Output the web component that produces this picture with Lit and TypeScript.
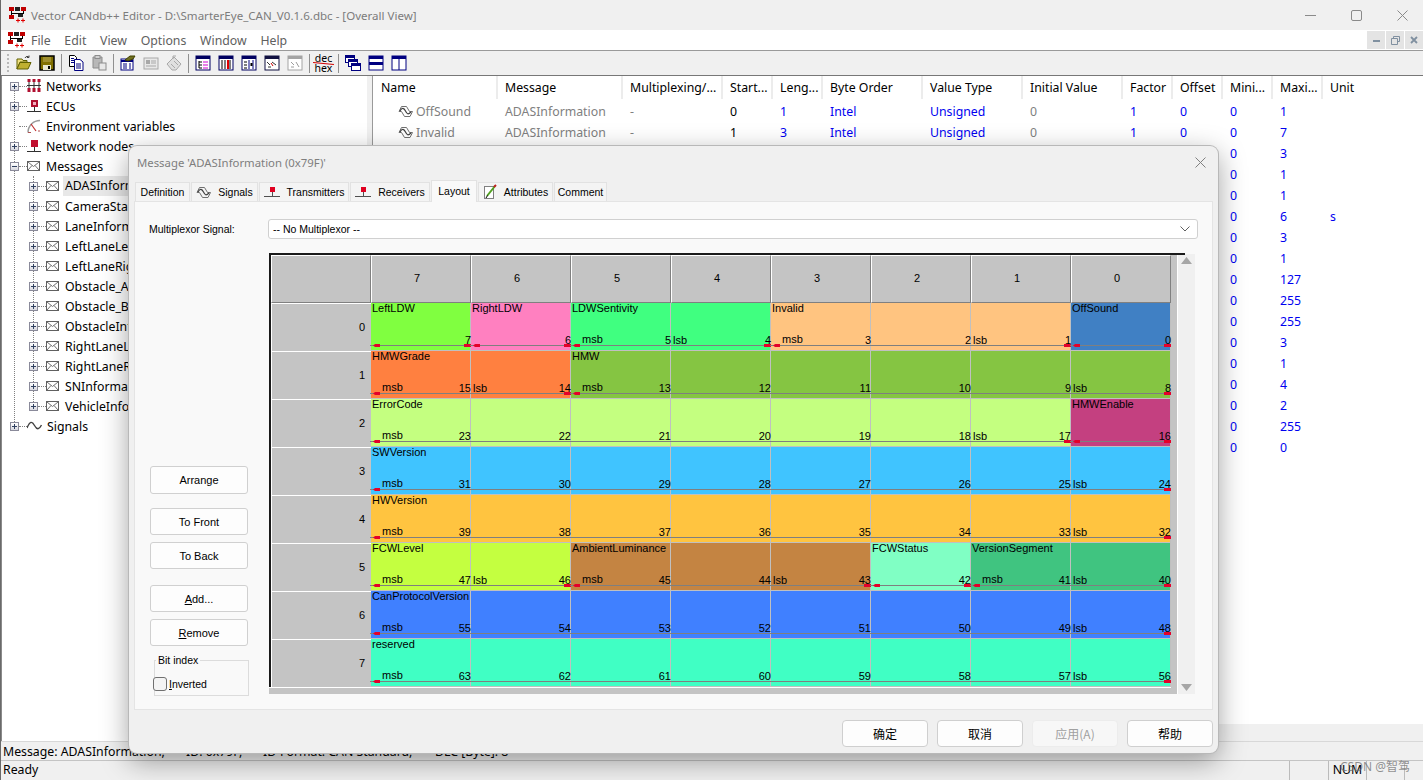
import { LitElement, html, css, svg } from "lit";
import { customElement } from "lit/decorators.js";

const s = (w: number, h: number, inner: unknown) =>
  html`<svg class="ic" width=${w} height=${h} viewBox="0 0 ${w} ${h}">${inner}</svg>`;

const appIcon = s(18, 16, svg`
  <rect x="0" y="0" width="5" height="4" fill="#c00000"/><rect x="6" y="0" width="5" height="4" fill="#202020"/><rect x="12" y="0" width="5" height="4" fill="#c00000"/>
  <path d="M2.5 4V7M14.5 4V7M2.5 6.5H14.5M2.5 7V10" stroke="#000" fill="none"/>
  <rect x="0" y="8" width="5" height="4" fill="#c00000"/><rect x="9" y="7" width="5" height="3" fill="#202020"/>
  <path d="M7 13.5H11M9 11.5V15.5M12 13.5H16M14 11.5V15.5" stroke="#e00000" fill="none"/>`);

const networksIcon = s(14, 14, svg`
  <path d="M0 6.5H14M2 3V11M7 3V11M12 3V11" stroke="#303030" fill="none"/>
  <rect x="0.5" y="0" width="3" height="3" fill="#b01030"/><rect x="5.5" y="0" width="3" height="3" fill="#b01030"/><rect x="10.5" y="0" width="3" height="3" fill="#b01030"/>
  <rect x="0.5" y="9" width="3" height="4" fill="#b01030"/><rect x="5.5" y="9" width="3" height="4" fill="#b01030"/><rect x="10.5" y="9" width="3" height="4" fill="#b01030"/>`);
const ecuIcon = s(14, 14, svg`
  <rect x="4" y="1" width="7" height="7" fill="#b01030"/><rect x="6" y="3" width="3" height="3" fill="#f0b0c0"/>
  <path d="M7.5 8V12M0 12.5H14" stroke="#303030" fill="none"/>`);
const nodeIcon = s(14, 14, svg`
  <rect x="4" y="1" width="7" height="7" fill="#c01030"/>
  <path d="M7.5 8V12M0 12.5H14" stroke="#303030" fill="none"/>`);
const envIcon = s(14, 14, svg`
  <path d="M1 13.5A12 12 0 0 1 13 1.5" stroke="#9a9a9a" stroke-width="1.5" fill="none"/>
  <path d="M4 5L9 12" stroke="#c03030" stroke-width="1.2" fill="none"/>
  <path d="M1 13.5H4M12 13V11" stroke="#b05050" fill="none"/>`);
const mailIcon = s(14, 12, svg`
  <rect x="0.5" y="1.5" width="12" height="9" fill="#fff" stroke="#606060"/>
  <path d="M1 2L6.5 6.5L12 2M1 10L5 5.5M12 10L8 5.5" stroke="#707070" fill="none"/>`);
const waveIcon = s(15, 12, svg`
  <path d="M0 8C3 1 5 1 7.5 5.5S12 10 14.5 5" stroke="#404040" stroke-width="1.4" fill="none"/>`);
const sigIcon = s(15, 13, svg`
  <path d="M1 6.500L3.500 1.500H8.500L11.500 6.500H14.500L12 11.500H6.500L3.500 6.500H1" stroke="#707070" stroke-width="1" fill="none"/>
  <path d="M2 6C4 2 6 3 7.500 6S10 10 13 7" stroke="#404040" stroke-width="1.200" fill="none"/>`);
const txIcon = s(16, 13, svg`
  <rect x="6" y="1" width="5" height="5" fill="#e00020"/>
  <path d="M8.500 6V10M0 10.500H16" stroke="#505050" fill="none"/>`);
const attrIcon = s(14, 16, svg`
  <rect x="1.500" y="2.500" width="9" height="12" fill="#fff" stroke="#808080"/>
  <path d="M4 12L12 2" stroke="#50a020" stroke-width="2"/><path d="M11 3L13 1" stroke="#c02020" stroke-width="2"/><path d="M3 14L4.500 11.500" stroke="#000"/>`);

const openIcon = s(16, 16, svg`
  <path d="M1 4H6L7 5.500H11V7H4L1 14Z" fill="#f0e080" stroke="#606000"/>
  <path d="M1 14L4 7.500H15L12 14Z" fill="#c0b030" stroke="#606000"/>
  <path d="M9 3C10 1 12 1 13 2.500M13 2.500V0.500M13 2.500H11" stroke="#404040" fill="none"/>`);
const saveIcon = s(16, 16, svg`
  <rect x="1" y="1" width="14" height="14" fill="#807000" stroke="#000" stroke-width="1.500"/>
  <rect x="4" y="2" width="8" height="5" fill="#a09030"/>
  <rect x="4" y="10" width="8" height="5" fill="#e8e8d0"/><rect x="9" y="11" width="2" height="3" fill="#000"/>`);
const copyIcon = s(16, 16, svg`
  <path d="M1.500 0.500H6.500L8.500 2.500V11.500H1.500Z" fill="#fff" stroke="#000"/>
  <path d="M6.500 4.500H12L15 7V15.500H6.500Z" fill="#fff" stroke="#000080"/>
  <path d="M3 3.500H6M3 5.500H6M3 7.500H6M8 9H13M8 11H13M8 13H13" stroke="#000080" fill="none"/>`);
const pasteGray = s(16, 16, svg`
  <path d="M2 2H11V13H2Z" fill="#b8b8b8" stroke="#8c8c8c"/><rect x="4" y="0.500" width="5" height="3" fill="#d0d0d0" stroke="#8c8c8c"/>
  <rect x="8" y="8" width="7" height="7" fill="#e8e8e8" stroke="#8c8c8c"/>`);
const editIcon = s(16, 16, svg`
  <rect x="1" y="4" width="12" height="11" fill="#fff" stroke="#000080"/>
  <path d="M1 6H13" stroke="#000080" stroke-width="2"/><path d="M3 9H7M9 9H11M3 11H7M9 11H11M3 13H7M9 13H11" stroke="#000080"/>
  <path d="M5 5L10 1H15L13 4L8 6Z" fill="#707020" stroke="#404000"/>`);
const gray2 = s(16, 16, svg`
  <rect x="1" y="3" width="14" height="11" fill="#e8e8e8" stroke="#a8a8a8"/>
  <rect x="3" y="5" width="4" height="4" fill="#a8a8a8"/><path d="M8 6H13M8 8H13M3 11H13" stroke="#a8a8a8"/>`);
const gray3 = s(16, 16, svg`
  <path d="M1 9L8 2L15 9L10 15H6Z" fill="#e0e0e0" stroke="#a8a8a8"/><path d="M5 9L9 13M8 6L12 10M7 4V1H10" stroke="#a8a8a8" fill="none"/>`);
const win = (inner: unknown, c = "#000060") => s(16, 16, svg`
  <rect x="1" y="1" width="14" height="14" fill="#fff" stroke=${c}/>
  <rect x="1" y="1" width="14" height="3" fill=${c}/>${inner}`);
const v1 = win(svg`<path d="M4 6V13M4 7H7M4 10H7M4 13H7" stroke="#000" fill="none"/><path d="M8 7H13M8 10H13M8 13H13" stroke="#d000d0"/>`);
const v2 = win(svg`<path d="M4 5V14M7 5V14M12 5V14" stroke="#000"/><path d="M10 5V14" stroke="#e00000" stroke-width="2"/>`);
const v3 = win(svg`<path d="M3 7H6M3 10H6M3 13H6" stroke="#000"/><path d="M8 5V14M12 5V14" stroke="#000080"/><rect x="9.500" y="8" width="2" height="3" fill="#000"/>`);
const v4 = win(svg`<path d="M3 7L6 10M8 7L12 10M4 12H7" stroke="#303030"/><path d="M7 8L9 11" stroke="#d00000"/>`, "#101040");
const v5 = win(svg`<path d="M4 7L7 10M9 7L12 12M4 12H7" stroke="#9c9c9c"/>`, "#a4a4a4");
const cascade = s(16, 16, svg`
  <rect x="0.500" y="0.500" width="9" height="7" fill="#fff" stroke="#000080"/><rect x="0.500" y="0.500" width="9" height="2.500" fill="#000080"/>
  <rect x="3.500" y="4.500" width="9" height="7" fill="#fff" stroke="#000080"/><rect x="3.500" y="4.500" width="9" height="2.500" fill="#000080"/>
  <rect x="6.500" y="8.500" width="9" height="7" fill="#fff" stroke="#000080"/><rect x="6.500" y="8.500" width="9" height="2.500" fill="#000080"/>`);
const hsplit = s(16, 16, svg`
  <rect x="1" y="1" width="14" height="14" fill="#fff" stroke="#000080"/>
  <rect x="1" y="1" width="14" height="3" fill="#000080"/><rect x="1" y="7" width="14" height="3" fill="#000080"/>`);
const vsplit = s(16, 16, svg`
  <rect x="1" y="1" width="14" height="14" fill="#fff" stroke="#000080"/>
  <rect x="1" y="1" width="14" height="3" fill="#000080"/><path d="M8 1V15" stroke="#000080"/>`);

const MESSAGES = ["ADASInformation", "CameraStatus", "LaneInformation", "LeftLaneLeft", "LeftLaneRight", "Obstacle_A", "Obstacle_B", "ObstacleInfo", "RightLaneLeft", "RightLaneRight", "SNInformation", "VehicleInformation"];
const COLS = ["Name", "Message", "Multiplexing/...", "Start...", "Leng...", "Byte Order", "Value Type", "Initial Value", "Factor", "Offset", "Mini...", "Maxi...", "Unit"];
const MAXI = ["1", "7", "3", "1", "1", "6", "3", "1", "127", "255", "255", "3", "1", "4", "2", "255", "0"];
const TABS: [string, number, unknown?][] = [
  ["Definition", 55], ["Signals", 67, sigIcon], ["Transmitters", 90, txIcon], ["Receivers", 80, txIcon],
  ["Layout", 46], ["Attributes", 75, attrIcon], ["Comment", 53],
];
// name, colour, first column (0 = bit 7), span
type Sig = [string, string, number, number];
const ROWS: Sig[][] = [
  [["LeftLDW", "#80ff40", 0, 1], ["RightLDW", "#ff80c0", 1, 1], ["LDWSentivity", "#40ff80", 2, 2], ["Invalid", "#ffc480", 4, 3], ["OffSound", "#4080c4", 7, 1]],
  [["HMWGrade", "#ff8040", 0, 2], ["HMW", "#85c542", 2, 6]],
  [["ErrorCode", "#c4ff80", 0, 7], ["HMWEnable", "#c44080", 7, 1]],
  [["SWVersion", "#40c4ff", 0, 8]],
  [["HWVersion", "#ffc440", 0, 8]],
  [["FCWLevel", "#c4ff40", 0, 2], ["AmbientLuminance", "#c48442", 2, 3], ["FCWStatus", "#80ffc4", 5, 1], ["VersionSegment", "#40c480", 6, 2]],
  [["CanProtocolVersion", "#4080ff", 0, 8]],
  [["reserved", "#40ffc4", 0, 8]],
];

@customElement("app-root")
export class AppRoot extends LitElement {
  static styles = css`
    :host { display: block; position: relative; width: 1423px; height: 780px; overflow: hidden; background: #f0f0f0;
      font-family: "Noto Sans", "Noto Sans CJK SC", sans-serif; font-size: 12.3px; color: #000; }
    .ic { display: block; flex: none; }
    .win { display: flex; flex-direction: column; height: 780px; border-left: 1px solid #6a6a6a; box-sizing: border-box; }
    .title { height: 30px; display: flex; align-items: center; padding-left: 8px; gap: 4px; font-size: 11.55px; color: #7c7c7c; flex: none; }
    .wctl { margin-left: auto; margin-right: -2px; display: flex; }
    .wctl div { width: 46px; height: 30px; display: flex; align-items: center; justify-content: center; }
    .menu { height: 20px; background: #fff; display: flex; align-items: center; padding-left: 7px; color: #606060; flex: none; position: relative; }
    .menuitems { display: flex; gap: 13.7px; margin-left: 5px; }
    .mdi { margin-left: auto; display: flex; gap: 1px; }
    .mdi div { width: 18px; height: 18px; background: #e4e4e4; display: flex; align-items: center; justify-content: center; }
    .toolbar { border-top: 1px solid #9a9a9a; display: flex; align-items: center; box-sizing: border-box; flex: none; height: 26px; padding-left: 6px; border-bottom: 1px solid #777; }
    .grip { width: 2px; height: 18px; border-left: 2px dotted #b8b8b8; margin-right: 1px; }
    .tb { width: 23px; display: flex; justify-content: center; }
    .sep { width: 1px; height: 19px; background: #909090; margin: 0 2.5px; }
    .dechex { width: 23px; display: flex; flex-direction: column; align-items: center; font-size: 10.5px; line-height: 10px; position: relative; }
    .dechex i { position: absolute; left: 1px; right: 1px; top: 10px; border-top: 1px solid #d00000; transform: rotate(6deg); }
    .panes { flex: 1; display: flex; min-height: 0; gap: 5px; }
    .left { width: 366px; background: #fff; border-left: 1px solid #8a8a8a; position: relative; flex: none; box-sizing: border-box; }
    .right { flex: 1; display: flex; flex-direction: column; min-width: 0; border-left: 1px solid #9a9a9a; padding-left: 1px; background: linear-gradient(#fff, #fff) no-repeat 0 0 / 100% 648px; }
    .tree-line { position: absolute; border-left: 1px dotted #808080; }
    .tl0 { left: 12px; top: 10px; height: 340px; }
    .tl1 { left: 31px; top: 100px; height: 230px; }
    .row { height: 20px; display: flex; align-items: center; position: relative; white-space: nowrap; }
    .l0 { padding-left: 8px; }
    .l1 { padding-left: 27px; }
    .exp { width: 9px; height: 9px; border: 1px solid #8a8a9a; box-sizing: border-box; background: linear-gradient(#fff, #d8d8e0); position: relative; flex: none; }
    .exp::before { content: ""; position: absolute; left: 1px; right: 1px; top: 3px; height: 1px; background: #304060; }
    .exp.plus::after { content: ""; position: absolute; top: 1px; bottom: 1px; left: 3px; width: 1px; background: #304060; }
    .noexp { width: 9px; flex: none; }
    .dots { width: 8px; border-top: 1px dotted #808080; flex: none; }
    .label { margin-left: 5px; }
    .sel { background: #e8e8e8; padding: 0 40px 0 2px; margin-left: 3px; line-height: 20px; }
    .thead, .trow { display: grid; grid-template-columns: 124px 125px 100px 50px 50px 100px 100px 100px 50px 50px 50px 50px 100px; }
    .thead { height: 25px; flex: none; white-space: nowrap; }
    .thead div { padding-left: 7px; border-right: 2px solid #ececec; line-height: 24px; height: 23px; }
    .thead div:last-child { border-right: 0; }
    .trow { height: 21px; line-height: 21px; color: #0000f0; }
    .trow > div { padding-left: 7px; white-space: nowrap; }
    .tbody { flex: 1; min-height: 0; }
    .g { color: #808080; }
    .k { color: #000; }
    .trow > .namecell { display: flex; align-items: center; gap: 3px; padding-left: 24px; }
    .hbar { height: 17px; flex: none; }
    .status { height: 20px; border-top: 1px solid #d8d8d8; padding-left: 2px; line-height: 20px; display: flex; flex: none; box-sizing: border-box; border-bottom: 1px solid #c4c4c4; white-space: nowrap; }
    .s1 { width: 183px; } .s2 { width: 77px; } .s3 { width: 172px; }
    .ready { height: 19px; padding-left: 2px; line-height: 18px; display: flex; flex: none; }
    .ind { margin-left: auto; display: flex; }
    .ind div { border-left: 1px solid #bbb; height: 19px; }
    .i1 { width: 38px; } .i2 { width: 37px; text-align: center; } .i3 { width: 37px; } .i4 { width: 18px; }
    .mark { position: absolute; left: 1340px; top: 757px; font-size: 12px; color: rgba(110,110,110,.75); }

    .dlg { position: absolute; left: 129px; top: 146px; width: 1089px; height: 607px; background: #f0f0f0; border-radius: 8px;
      box-shadow: 0 0 0 1px #b8b8b8, 0 8px 28px rgba(0,0,0,.38); display: flex; flex-direction: column; box-sizing: border-box;
      font-family: "Liberation Sans", Arial, sans-serif; font-size: 11px; }
    .dtitle { height: 32px; display: flex; align-items: center; padding-left: 8px; color: #7e7e7e; font-size: 11.35px; font-family: "Noto Sans", sans-serif; flex: none; }
    .dclose { margin-left: auto; margin-right: 12px; }
    .tabs { display: flex; height: 23px; margin-left: 6px; gap: 1px; align-items: flex-end; flex: none; position: relative; z-index: 1; font-size: 10.5px; }
    .tab { height: 19px; background: #f4f4f4; border: 1px solid #e2e2e2; border-bottom: 0; box-sizing: border-box; display: flex; align-items: center; justify-content: center; gap: 7px; white-space: nowrap; }
    .tab.on { height: 22px; background: #f9f9f9; margin-bottom: -1px; padding-bottom: 2px; }
    .panel { margin: 0 5px; height: 509px; background: #f9f9f9; border: 1px solid #e4e4e4; box-sizing: border-box; padding: 17px 14px 0; display: flex; flex-direction: column; flex: none; }
    .mux { display: flex; align-items: center; height: 21px; flex: none; font-size: 10.5px; padding-bottom: 1px; box-sizing: border-box; }
    .mux label { width: 119px; flex: none; }
    .combo { width: 930px; height: 20px; background: #fff; border: 1px solid #d0d0d0; border-radius: 3px; box-sizing: border-box; display: flex; align-items: center; padding: 0 7px 1px 4px; justify-content: space-between; }
    .body { display: flex; margin-top: 13px; flex: 1; min-height: 0; }
    .side { width: 100px; height: 443px; margin-left: 1px; margin-right: 19px; display: flex; flex-direction: column; justify-content: flex-end; flex: none; }
    .btn { height: 27px; width: 98px; background: #fdfdfd; border: 1px solid #d0d0d0; border-radius: 3px; box-sizing: border-box; display: flex; align-items: center; justify-content: center; flex: none; white-space: pre; }
    .b-a { height: 28px; margin-bottom: 14px; }
    .b-f { margin-bottom: 7px; } .b-b { margin-bottom: 16px; } .b-d { margin-bottom: 7px; } .b-r { margin-bottom: 14px; }
    .grp { height: 36px; width: 95px; margin-left: 4px; border: 1px solid #dcdcdc; box-sizing: border-box; position: relative; flex: none; font-size: 10.5px; }
    .grp b { font-weight: normal; position: absolute; left: 1px; top: -7px; padding: 0 2px; background: #f9f9f9; line-height: 12px; }
    .chk { position: absolute; left: -2px; top: 16px; display: flex; align-items: center; gap: 2px; }
    .chk i { width: 12px; height: 12px; border: 1px solid #707070; border-radius: 3px; background: #f4f4f4; display: block; }
    .frame { position: relative; width: 926px; height: 441px; display: flex; flex: none; }
    .frame::before { content: ""; position: absolute; left: 0; top: 0; width: 916px; height: 2px; background: #1a1a1a; z-index: 2; }
    .view { width: 909px; flex: none; background: #c4c4c4; box-sizing: border-box; padding-top: 2px; height: 441px; border-right: 1px solid #fff; }
    .grid { display: grid; grid-template-columns: repeat(9, 100px); grid-auto-rows: 48px; width: 900px; height: 432px; border-left: 2px solid #1a1a1a; box-shadow: 0 1px 0 #fff; }
    .hd { background: #c4c4c4; border: 1px solid; border-color: #fff #808080 #808080 #fff; box-sizing: border-box; display: flex; align-items: center; justify-content: center; padding: 0 8px 2px 0; }
    .rh { background: #c4c4c4; border-top: 1px solid #fff; border-left: 1px solid #fff; box-sizing: border-box; display: flex; align-items: center; justify-content: flex-end; padding: 0 6px 2px 0; }
    .cell { position: relative; border-right: 1px solid #c0c0c0; border-bottom: 1px solid #c0c0c0; box-sizing: border-box; white-space: nowrap; line-height: 12px; }
    .nm { position: absolute; left: 1px; top: -1px; z-index: 1; }
    .num { position: absolute; right: -1px; top: 31px; z-index: 1; }
    .msb { position: absolute; left: 11px; top: 30px; }
    .lsb { position: absolute; left: 2px; top: 31px; }
    .ln { position: absolute; left: -1px; right: -1px; top: 42px; height: 1px; background: #7f7f7f; }
    .mk { position: absolute; top: 41px; width: 7px; height: 3px; background: #e4002a; clip-path: polygon(0 50%, 30% 0, 100% 0, 100% 100%, 30% 100%); }
    .mk.st { left: 2px; }
    .mk.en { right: -1px; clip-path: none; }
    .sb { flex: 1; background: #f0f0f0; display: flex; flex-direction: column; align-items: center; justify-content: space-between; padding: 3px 0; height: 440px; margin-top: 1px; box-sizing: border-box; }
    .btns { flex: 1; display: flex; justify-content: flex-end; align-items: flex-start; gap: 9px; padding: 10px 5px 0 0; }
    .btns div { width: 86px; height: 27px; background: #fdfdfd; border: 1px solid #cfcfcf; border-radius: 4px; box-sizing: border-box; display: flex; align-items: center; justify-content: center; font: 12px "Noto Sans CJK SC", sans-serif; }
    .btns .off { background: #f7f7f7; border-color: #ececec; color: #a0a0a0; }
  `;

  private tree() {
    const top: [string, unknown, boolean?][] = [
      ["Networks", networksIcon, true], ["ECUs", ecuIcon, true], ["Environment variables", envIcon, false], ["Network nodes", nodeIcon, true],
    ];
    return html`<div class="left">
      <div class="tree-line tl0"></div><div class="tree-line tl1"></div>
      ${top.map(([t, ic, e]) => html`<div class="row l0">
        ${e ? html`<span class="exp plus"></span>` : html`<span class="noexp"></span>`}<span class="dots"></span>${ic}<span class="label">${t}</span></div>`)}
      <div class="row l0"><span class="exp"></span><span class="dots"></span>${mailIcon}<span class="label">Messages</span></div>
      ${MESSAGES.map((m, i) => html`<div class="row l1"><span class="exp plus"></span><span class="dots"></span>${mailIcon}<span class="label ${i === 0 ? "sel" : ""}">${m}</span></div>`)}
      <div class="row l0"><span class="exp plus"></span><span class="dots"></span>${waveIcon}<span class="label">Signals</span></div>
    </div>`;
  }

  private table() {
    return html`<div class="right">
      <div class="thead">${COLS.map((c) => html`<div>${c}</div>`)}</div>
      <div class="tbody">
        ${MAXI.map((m, i) => {
          const first = i < 2;
          const rows = first
            ? (i === 0 ? ["0", "1", "Intel", "Unsigned", "0", "1", "0"] : ["1", "3", "Intel", "Unsigned", "0", "1", "0"])
            : ["", "", "", "", "", "", ""];
          return html`<div class="trow">
            <div class="namecell g">${first ? html`${sigIcon}${i === 0 ? "OffSound" : "Invalid"}` : ""}</div>
            <div class="g">${first ? "ADASInformation" : ""}</div>
            <div class="g">${first ? "-" : ""}</div>
            <div class="k">${rows[0]}</div><div>${rows[1]}</div><div>${rows[2]}</div><div>${rows[3]}</div>
            <div class="g">${rows[4]}</div><div>${rows[5]}</div><div>${rows[6]}</div>
            <div>0</div><div>${m}</div><div>${i === 5 ? "s" : ""}</div>
          </div>`;
        })}
      </div>
      <div class="hbar"></div>
    </div>`;
  }

  private cells() {
    const out: unknown[] = [];
    out.push(html`<div class="hd"></div>`);
    for (let b = 7; b >= 0; b--) out.push(html`<div class="hd">${b}</div>`);
    ROWS.forEach((row, r) => {
      out.push(html`<div class="rh">${r}</div>`);
      row.forEach(([name, color, col, span]) => {
        for (let i = 0; i < span; i++) {
          const bit = r * 8 + 7 - (col + i);
          const isFirst = i === 0, isLast = i === span - 1;
          out.push(html`<div class="cell" style="background:${color}">
            ${isFirst ? html`<span class="nm">${name}</span>` : ""}
            ${isFirst && span > 1 ? html`<span class="msb">msb</span>` : ""}
            ${isLast && span > 1 ? html`<span class="lsb">lsb</span>` : ""}
            <span class="num">${bit}</span>
            <span class="ln"></span>
            ${isFirst ? html`<span class="mk st"></span>` : ""}
            ${isLast ? html`<span class="mk en"></span>` : ""}
          </div>`);
        }
      });
    });
    return out;
  }

  private dialog() {
    return html`<div class="dlg">
      <div class="dtitle">Message 'ADASInformation (0x79F)'
        <svg class="dclose" width="11" height="11" viewBox="0 0 11 11"><path d="M0.500 0.500L10.500 10.500M10.500 0.500L0.500 10.500" stroke="#808080" fill="none"/></svg>
      </div>
      <div class="tabs">
        ${TABS.map(([t, w, ic]) => html`<div class="tab ${t === "Layout" ? "on" : ""}" style="width:${w}px">${ic ?? ""}${t}</div>`)}
      </div>
      <div class="panel">
        <div class="mux"><label>Multiplexor Signal:</label>
          <div class="combo">-- No Multiplexor --
            <svg width="10" height="6" viewBox="0 0 10 6"><path d="M0.500 0.500L5 5L9.500 0.500" stroke="#606060" fill="none"/></svg>
          </div>
        </div>
        <div class="body">
          <div class="side">
            <div class="btn b-a">Arrange</div>
            <div class="btn b-f">To Front</div>
            <div class="btn b-b">To Back</div>
            <div class="btn b-d"><u>A</u>dd...</div>
            <div class="btn b-r"><u>R</u>emove</div>
            <div class="grp"><b>Bit index</b><div class="chk"><i></i><span><u>I</u>nverted</span></div></div>
          </div>
          <div class="frame">
            <div class="view"><div class="grid">${this.cells()}</div></div>
            <div class="sb">
              <svg width="11" height="7" viewBox="0 0 11 7"><path d="M5.500 0L11 7H0Z" fill="#a6a6a6"/></svg>
              <svg width="11" height="7" viewBox="0 0 11 7"><path d="M0 0H11L5.500 7Z" fill="#a6a6a6"/></svg>
            </div>
          </div>
        </div>
      </div>
      <div class="btns"><div>确定</div><div>取消</div><div class="off">应用(A)</div><div>帮助</div></div>
    </div>`;
  }

  render() {
    return html`<div class="win">
      <div class="title">${appIcon}<span>Vector CANdb++ Editor - D:\\SmarterEye_CAN_V0.1.6.dbc - [Overall View]</span>
        <div class="wctl">
          <div><svg width="11" height="1" viewBox="0 0 11 1"><path d="M0 0.500H11" stroke="#8a8a8a"/></svg></div>
          <div><svg width="11" height="11" viewBox="0 0 11 11"><rect x="0.500" y="0.500" width="10" height="10" rx="1.500" fill="none" stroke="#8a8a8a"/></svg></div>
          <div><svg width="11" height="11" viewBox="0 0 11 11"><path d="M0.500 0.500L10.500 10.500M10.500 0.500L0.500 10.500" stroke="#8a8a8a"/></svg></div>
        </div>
      </div>
      <div class="menu">${appIcon}
        <div class="menuitems"><span>File</span><span>Edit</span><span>View</span><span>Options</span><span>Window</span><span>Help</span></div>
        <div class="mdi">
          <div><svg width="7" height="3" viewBox="0 0 7 3"><rect width="7" height="2" y="1" fill="#8090a0"/></svg></div>
          <div><svg width="9" height="9" viewBox="0 0 9 9"><path d="M2.500 2.500V0.500H8.500V5.500H6M0.500 2.500H6.500V8.500H0.500Z" fill="none" stroke="#8090a0"/></svg></div>
          <div><svg width="8" height="8" viewBox="0 0 8 8"><path d="M1 1L7 7M7 1L1 7" stroke="#8090a0" stroke-width="1.800"/></svg></div>
        </div>
      </div>
      <div class="toolbar">
        <span class="grip"></span>
        <span class="tb">${openIcon}</span><span class="tb">${saveIcon}</span><span class="sep"></span>
        <span class="tb">${copyIcon}</span><span class="tb">${pasteGray}</span><span class="sep"></span>
        <span class="tb">${editIcon}</span><span class="tb">${gray2}</span><span class="tb">${gray3}</span><span class="sep"></span>
        <span class="tb">${v1}</span><span class="tb">${v2}</span><span class="tb">${v3}</span><span class="tb">${v4}</span><span class="tb">${v5}</span><span class="sep"></span>
        <span class="dechex"><span>dec</span><span>hex</span><i></i></span><span class="sep"></span>
        <span class="tb">${cascade}</span><span class="tb">${hsplit}</span><span class="tb">${vsplit}</span>
      </div>
      <div class="panes">${this.tree()}${this.table()}</div>
      <div class="status"><span class="s1">Message: ADASInformation,</span><span class="s2">ID: 0x79F,</span><span class="s3">ID-Format: CAN Standard,</span><span>DLC [Byte]: 8</span></div>
      <div class="ready"><span>Ready</span><div class="ind"><div class="i1"></div><div class="i2">NUM</div><div class="i3"></div><div class="i4"></div></div></div>
    </div>
    ${this.dialog()}
    <div class="mark">CSDN @智驾</div>`;
  }
}
